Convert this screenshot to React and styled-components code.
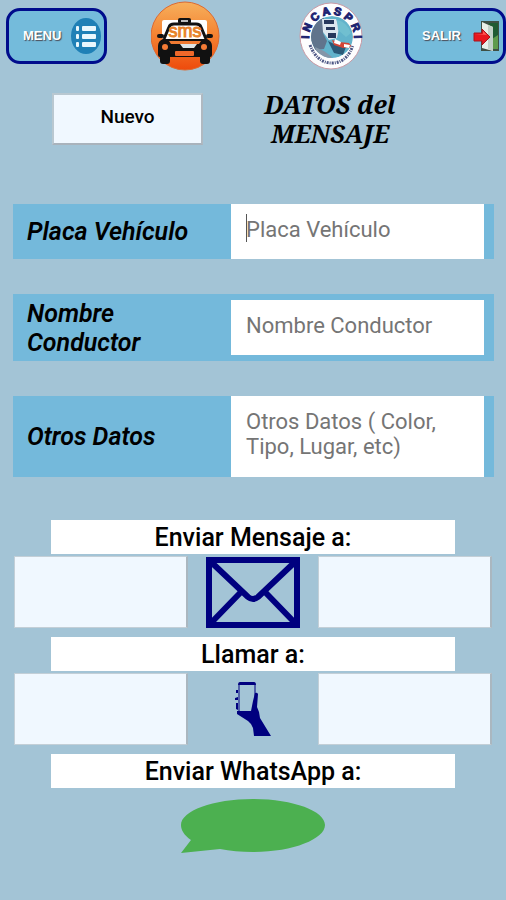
import React from 'react'
import styled, { createGlobalStyle } from 'styled-components';

const GlobalStyle = createGlobalStyle`
  *, *::before, *::after {
    box-sizing: border-box;
  }
  body {
    margin: 0;
    background: #a3c4d6;
    color: #000;
    font-family: Roboto, "Liberation Sans", sans-serif;
  }
  button {
    font-family: inherit;
    color: inherit;
    cursor: pointer;
  }
`

const MenuIcon = () => (
  <svg width="32" height="36" viewBox="0 0 32 36" aria-hidden="true">
    <ellipse cx="16" cy="18" rx="15" ry="18" fill="#1f80b6" />
    <g fill="#e9f7fd">
      <rect x="6" y="8" width="3" height="5" rx="1" />
      <rect x="6" y="16" width="3" height="5" rx="1" />
      <rect x="6" y="24" width="3" height="5" rx="1" />
      <rect x="12" y="8" width="14" height="5" rx="1" />
      <rect x="12" y="16" width="14" height="5" rx="1" />
      <rect x="12" y="24" width="14" height="5" rx="1" />
    </g>
  </svg>
)

const ExitIcon = () => (
  <svg width="28" height="32" viewBox="0 0 28 32" aria-hidden="true">
    <rect x="8" y="1" width="18" height="30" fill="#3e4f45" />
    <path d="M16 3h9v26h-9z" fill="#1f5a33" />
    <path d="M16 21l9-6v14h-9z" fill="#5f9a4c" />
    <path d="M9 2l11 5v24L9 28z" fill="#e9efe9" />
    <path d="M15 5l5 2v24l-5-2z" fill="#c3d0c8" />
    <path d="M1 13h8V9l8 8-8 8v-4H1z" fill="#e8171f" stroke="#a9151c" strokeWidth="1" />
    <path d="M2 14h8v-3l4 4z" fill="#ff5a55" />
  </svg>
)

const TaxiLogo = () => (
  <svg width="69" height="70" viewBox="0 0 69 70" role="img" aria-label="sms">
    <defs>
      <linearGradient id="taxi_bg" x1="0" y1="0" x2="0" y2="1">
        <stop offset="0" stopColor="#f6b05d" />
        <stop offset="0.45" stopColor="#f58634" />
        <stop offset="1" stopColor="#ee4a0c" />
      </linearGradient>
    </defs>
    <circle cx="34" cy="35" r="34" fill="url(#taxi_bg)" stroke="#dc6a32" strokeWidth="1" />
    <rect x="11" y="19" width="45" height="19" rx="2" fill="#fff" />
    <rect x="27" y="17" width="13" height="6" rx="2" fill="#111" />
    <rect x="30" y="19" width="7" height="2" fill="#bbb" />
    <path d="M13 38l5-12q1-3 5-3h22q4 0 5 3l5 12" fill="#fff" stroke="#111" strokeWidth="3" />
    <text x="34" y="36" textAnchor="middle" fontFamily="Liberation Sans, sans-serif" fontSize="18" fill="#e8832a" stroke="#e8832a" strokeWidth="1">sms</text>
    <rect x="6" y="33" width="7" height="4" rx="2" fill="#111" />
    <rect x="55" y="33" width="7" height="4" rx="2" fill="#111" />
    <path d="M12 38h44q5 2 5 7v9q0 2-2 2v4q0 3-3 3h-4q-3 0-3-3v-4H19v4q0 3-3 3h-4q-3 0-3-3v-4q-2 0-2-2v-9q0-5 5-7z" fill="#111" />
    <path d="M18 40h32l-2 3H20z" fill="#f07a32" />
    <path d="M29 43h17l-3 4H32z" fill="#dfe4e6" />
    <circle cx="14" cy="46" r="3" fill="#f27a35" />
    <circle cx="53" cy="46" r="3" fill="#f27a35" />
    <rect x="24" y="50" width="19" height="5" rx="1" fill="#f0682a" />
  </svg>
)

const IncaspriLogo = () => (
  <svg width="65" height="68" viewBox="0 0 65 68" role="img" aria-label="INCASPRI">
    <defs>
      <path id="ring_top" d="M10 36a22 23 0 1 1 45 0" />
      <clipPath id="globe">
        <circle cx="33" cy="35" r="21" />
      </clipPath>
    </defs>
    <ellipse cx="32" cy="34" rx="31" ry="33" fill="#fdfdfe" stroke="#c99aa5" strokeWidth="1" />
    <g clipPath="url(#globe)">
      <circle cx="33" cy="35" r="21" fill="#62b3cb" />
      <path d="M10 14h14l3 8-3 9 4 8-3 8-9 1-6-14z" fill="#60748c" />
      <path d="M23 17h14l3 9-2 10-8 2-6-8z" fill="#dbe6ee" />
      <path d="M25 18h10v4H25zM27 25h9v3h-9zM29 31h8v5h-8z" fill="#26385c" />
      <path d="M38 18q10 2 14 13l-5 4-8-7z" fill="#70bfd0" />
      <path d="M29 39l8 4 10 2-3 8-9-2z" fill="#2b5a78" />
      <path d="M33 38l7 2 10 1 3 4-9 1-9-3z" fill="#d34435" />
      <path d="M36 37l6 3-1 3-6-2zM45 42l6 1-1 3-5-1z" fill="#fff" />
      <path d="M16 45l9 4 8 6-5 4-9-4z" fill="#8496a8" />
    </g>
    <text fontFamily="Liberation Sans, sans-serif" fontSize="11" fontWeight="700" fill="#1d2370" stroke="#1d2370" strokeWidth="1">
      <textPath href="#ring_top" startOffset="50%" textAnchor="middle">I N C A S P R I</textPath>
    </text>
    <path d="M11 43q7 18 22 18t21-18" fill="none" stroke="#4c5684" strokeWidth="3" strokeDasharray="2 1 1 1" />
  </svg>
)

const EnvelopeIcon = () => (
  <svg width="94" height="71" viewBox="0 0 94 71" aria-hidden="true">
    <g fill="none" stroke="#00007f" strokeWidth="6">
      <rect x="3" y="3" width="88" height="65" />
      <path d="M4 4l38 36q5 4 10 0L90 4" />
      <path d="M4 67l31-32M90 67L59 35" />
    </g>
  </svg>
)

const PhoneIcon = () => (
  <svg width="36" height="54" viewBox="0 0 36 54" aria-hidden="true">
    <path d="M4 3v27M20 3v14" fill="none" stroke="#00007f" strokeWidth="1" />
    <path d="M5 0h14q2 0 2 3H3q0-3 2-3z" fill="#00007f" />
    <path d="M1 8h2v3H1zM0 16l3-1v3H0zM1 21h2v7l-2-1z" fill="#00007f" />
    <path d="M2 29h14l2-10 2-8q2-1 3 1l-1 13 2 5 1 6 11 18H19l-1-8q-1-4-5-7L2 32z" fill="#00007f" />
  </svg>
)

const BubbleIcon = () => (
  <svg width="144" height="54" viewBox="0 0 144 54" aria-hidden="true">
    <path d="M10 41C3 36 0 31 0 26C0 12 32 0 72 0s72 12 72 26s-32 27-72 27q-18 0-33-3L0 54z" fill="#4cb050" />
  </svg>
)

const fields = [
  {id: 'placa', label: 'Placa Vehículo', placeholder: 'Placa Vehículo', active: true},
  {id: 'conductor', label: 'Nombre Conductor', placeholder: 'Nombre Conductor', spaced: true},
  {id: 'otros', label: 'Otros Datos', placeholder: 'Otros Datos ( Color, Tipo, Lugar, etc)', multiline: true},
]

const actions = [
  {name: 'Enviar Mensaje', icon: <EnvelopeIcon />},
  {name: 'Llamar', icon: <PhoneIcon />},
]

const App = () => {
  return (
    <>
      <GlobalStyle />
      <Page>
        <Header>
          <HeaderButton type="button">MENU<MenuIcon /></HeaderButton>
          <Logos>
            <TaxiLogo />
            <IncaspriLogo />
          </Logos>
          <HeaderButton type="button">SALIR<ExitIcon /></HeaderButton>
        </Header>
        <TitleRow>
          <NewButton type="button">Nuevo</NewButton>
          <Title>DATOS del MENSAJE</Title>
        </TitleRow>
        <Form>
          {
            fields.map((field) => {
              return (
                <Field key={field.id} $spaced={field.spaced}>
                  <Label htmlFor={field.id}>{field.label}</Label>
                  <Control $active={field.active}>
                    {field.multiline
                      ? <TextArea id={field.id} rows={2} placeholder={field.placeholder} />
                      : <Input id={field.id} type="text" placeholder={field.placeholder} />}
                  </Control>
                </Field>
              )
            })
          }
        </Form>
        <Actions>
          {
            actions.map((action) => {
              return (
                <section key={action.name}>
                  <Band>{action.name} a:</Band>
                  <ContactRow>
                    <ContactButton type="button" aria-label={`${action.name} 1`} />
                    <IconButton type="button" aria-label={action.name}>{action.icon}</IconButton>
                    <ContactButton type="button" aria-label={`${action.name} 2`} />
                  </ContactRow>
                </section>
              )
            })
          }
          <section>
            <Band>Enviar WhatsApp a:</Band>
            <BubbleRow>
              <IconButton type="button" aria-label="Enviar WhatsApp"><BubbleIcon /></IconButton>
            </BubbleRow>
          </section>
        </Actions>
      </Page>
    </>
  )
}

const Page = styled.main`
  padding-bottom: 40px;
`

const Header = styled.header`
  display: grid;
  grid-template-columns: 101px 1fr 101px;
  align-items: center;
  height: 71px;
  padding-left: 6px;
`

const HeaderButton = styled.button`
  display: flex;
  align-items: center;
  justify-content: space-between;
  height: 56px;
  padding: 0 2px 0 14px;
  border: 3px solid #000c8c;
  border-radius: 14px;
  background: #74bbdb;
  color: #fff;
  font: 700 13px "Liberation Sans", sans-serif;
  text-shadow: 1px 1px 1px #4a4a55;
`

const Logos = styled.div`
  display: flex;
  align-items: center;
  justify-content: center;
  gap: 79px;
  padding-left: 2px;
`

const TitleRow = styled.div`
  display: grid;
  grid-template-columns: 1fr 1fr;
  align-items: center;
  height: 60px;
  margin-top: 18px;
`

const NewButton = styled.button`
  justify-self: end;
  width: 151px;
  height: 52px;
  margin-right: 50px;
  padding: 0 0 6px;
  border: 2px solid;
  border-color: #b9c8d1 #b0b9c1 #a9b3bc #b9c8d1;
  background: #f0f8ff;
  font-size: 19px;
  font-weight: 500;
`

const Title = styled.h1`
  width: 154px;
  margin: 0;
  font: italic 700 25px/29px "Noto Serif", "Liberation Serif", serif;
  text-align: center;
`

const Form = styled.form`
  display: flex;
  flex-direction: column;
  gap: 35px;
  padding: 55px 12px 0 13px;
`

const Field = styled.div`
  display: grid;
  grid-template-columns: 218fr 253fr;
  align-items: center;
  padding: ${(props) => (props.$spaced ? '6px 10px 6px 0' : '0 10px 0 0')};
  background: #74b9db;
`

const Label = styled.label`
  margin: -6px 0;
  padding: 0 14px;
  font-size: 25px;
  font-style: italic;
  font-weight: 600;
  line-height: 29px;
`

const Control = styled.div`
  position: relative;
  display: flex;
  &::before {
    content: '';
    display: ${(props) => (props.$active ? 'block' : 'none')};
    position: absolute;
    left: 15px;
    top: 10px;
    width: 1px;
    height: 28px;
    background: #555;
  }
`

const Input = styled.input`
  width: 100%;
  height: 55px;
  padding: 0 15px 4px;
  border: 0;
  border-radius: 0;
  outline: 0;
  background: #fff;
  font: 400 22px/25px Roboto, "Liberation Sans", sans-serif;
  &::placeholder {
    color: #757575;
  }
`

const TextArea = styled(Input).attrs({ as: 'textarea' })`
  height: 81px;
  padding: 13px 15px;
  resize: none;
  overflow: hidden;
`

const Actions = styled.div`
  display: flex;
  flex-direction: column;
  gap: 9px;
  margin-top: 43px;
`

const Band = styled.h2`
  width: 80%;
  height: 34px;
  margin: 0 auto;
  background: #fff;
  font-size: 25px;
  font-weight: 500;
  line-height: 36px;
  text-align: center;
`

const ContactRow = styled.div`
  display: grid;
  grid-template-columns: 4fr 3fr 4fr;
  margin-top: 2px;
  padding: 0 14px;
`

const ContactButton = styled.button`
  height: 72px;
  border: 1px solid #c3cfd7;
  border-right: 2px solid #aab7c0;
  background: #f0f8ff;
`

const IconButton = styled.button`
  display: flex;
  align-items: center;
  justify-content: center;
  padding: 0;
  border: 0;
  background: none;
`

const BubbleRow = styled.div`
  display: flex;
  justify-content: center;
  padding-top: 11px;
`

export default App
